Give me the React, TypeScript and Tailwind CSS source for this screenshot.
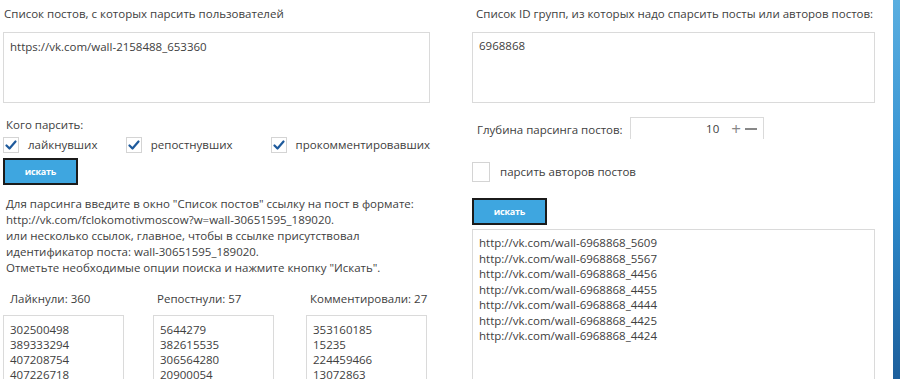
import React from "react";

const Check = ({ checked }: { checked: boolean }) => (
  <div className="w-[16px] h-[16px] border border-[#d4d4d4] bg-white flex items-center justify-center shrink-0">
    {checked && (
      <svg width="12" height="12" viewBox="0 0 12 12">
        <path d="M1.5 6.5 L4.5 9.5 L10.5 2.5" fill="none" stroke="#1e5a9c" strokeWidth="2.2" strokeLinecap="round" strokeLinejoin="round" />
      </svg>
    )}
  </div>
);

const Btn = () => (
  <div className="w-[75px] h-[27px] bg-[#3ea6e0] border-2 border-[#1b1b1b] flex items-center justify-center">
    <span className="text-white text-[9px] font-bold tracking-tight">искать</span>
  </div>
);

export default function App() {
  const left = ["302500498", "389333294", "407208754", "407226718"];
  const mid = ["5644279", "382615535", "306564280", "20900054"];
  const right = ["353160185", "15235", "224459466", "13072863"];
  const out = ["5609", "5567", "4456", "4455", "4444", "4425", "4424"];
  const lists: [string, string[], string, string][] = [
    ["Лайкнули: 360", left, "w-[150px]", "pl-[7px]"],
    ["Репостнули: 57", mid, "w-[153px]", "pl-[4px]"],
    ["Комментировали: 27", right, "w-[124px]", "pl-[4px]"],
  ];
  return (
    <div
      className="w-[900px] h-[379px] bg-white flex items-start overflow-hidden text-[#404040] text-[11.5px] leading-[16px]"
      style={{ fontFamily: '"Open Sans", "Noto Sans", sans-serif' }}
    >
      {/* left column */}
      <div className="w-[427px] ml-[3px] shrink-0">
        <div className="pt-[6px] pl-[1px] h-[32px]">Список постов, с которых парсить пользователей</div>
        <div className="h-[71px] border border-[#dadada] px-[6px] pt-[6px]">https://vk.com/wall-2158488_653360</div>
        <div className="mt-[14px] pl-[3px]">Кого парсить:</div>
        <div className="flex items-center h-[20px] mt-[2px]">
          <div className="flex items-center w-[123px]">
            <Check checked />
            <span className="ml-[9px]">лайкнувших</span>
          </div>
          <div className="flex items-center w-[145px]">
            <Check checked />
            <span className="ml-[9px]">репостнувших</span>
          </div>
          <div className="flex items-center">
            <Check checked />
            <span className="ml-[9px]">прокомментировавших</span>
          </div>
        </div>
        <div className="mt-[3px]">
          <Btn />
        </div>
        <div className="mt-[11px] pl-[3px] whitespace-nowrap">
          <div>Для парсинга введите в окно "Список постов" ссылку на пост в формате:</div>
          <div>http://vk.com/fclokomotivmoscow?w=wall-30651595_189020.</div>
          <div>или несколько ссылок, главное, чтобы в ссылке присутствовал</div>
          <div>идентификатор поста: wall-30651595_189020.</div>
          <div>Отметьте необходимые опции поиска и нажмите кнопку "Искать".</div>
        </div>
        <div className="flex mt-[15px]">
          {lists.map(([title, items, w, pl], i) => (
            <div key={i} className={`${w} shrink-0`}>
              <div className={`${pl} h-[24px] whitespace-nowrap`}>{title}</div>
              <div className="w-[121px] h-[80px] border border-[#dadada] px-[6px] pt-[6px] leading-[15px]">
                {items.map((t) => (
                  <div key={t}>{t}</div>
                ))}
              </div>
            </div>
          ))}
        </div>
      </div>

      {/* right column */}
      <div className="w-[403px] ml-[42px] h-[379px] flex flex-col shrink-0">
        <div className="pt-[6px] pl-[4px] h-[32px] shrink-0 whitespace-nowrap">
          Список ID групп, из которых надо спарсить посты или авторов постов:
        </div>
        <div className="h-[71px] shrink-0 border border-[#dadada] px-[6px] pt-[5px]">6968868</div>
        <div className="flex items-end mt-[14px] h-[22px] shrink-0">
          <span className="pl-[5px] pb-[1px] w-[158px]">Глубина парсинга постов:</span>
          <div className="w-[134px] h-[22px] border-t border-l border-r border-[#dadada] flex items-center justify-end pr-[6px]">
            <span>10</span>
            <span className="ml-[12px] text-[#888] text-[17px] leading-none">+</span>
            <span className="ml-[4px] w-[12px] h-[2px] bg-[#888]" />
          </div>
        </div>
        <div className="flex items-center mt-[22px] h-[21px] shrink-0">
          <div className="w-[18px] h-[20px] border border-[#d4d4d4]" />
          <span className="ml-[10px]">парсить авторов постов</span>
        </div>
        <div className="mt-[16px] shrink-0">
          <Btn />
        </div>
        <div className="mt-[4px] flex-1 border border-[#dadada] border-b-0 px-[6px] pt-[5px] leading-[15.5px]">
          {out.map((n) => (
            <div key={n}>http://vk.com/wall-6968868_{n}</div>
          ))}
        </div>
      </div>

      <div className="flex-1" />
      <div className="w-[7px] h-[379px] shrink-0 bg-gradient-to-b from-[#5aaee0] via-[#2f8fd0] to-[#1d5f9c]" />
    </div>
  );
}
